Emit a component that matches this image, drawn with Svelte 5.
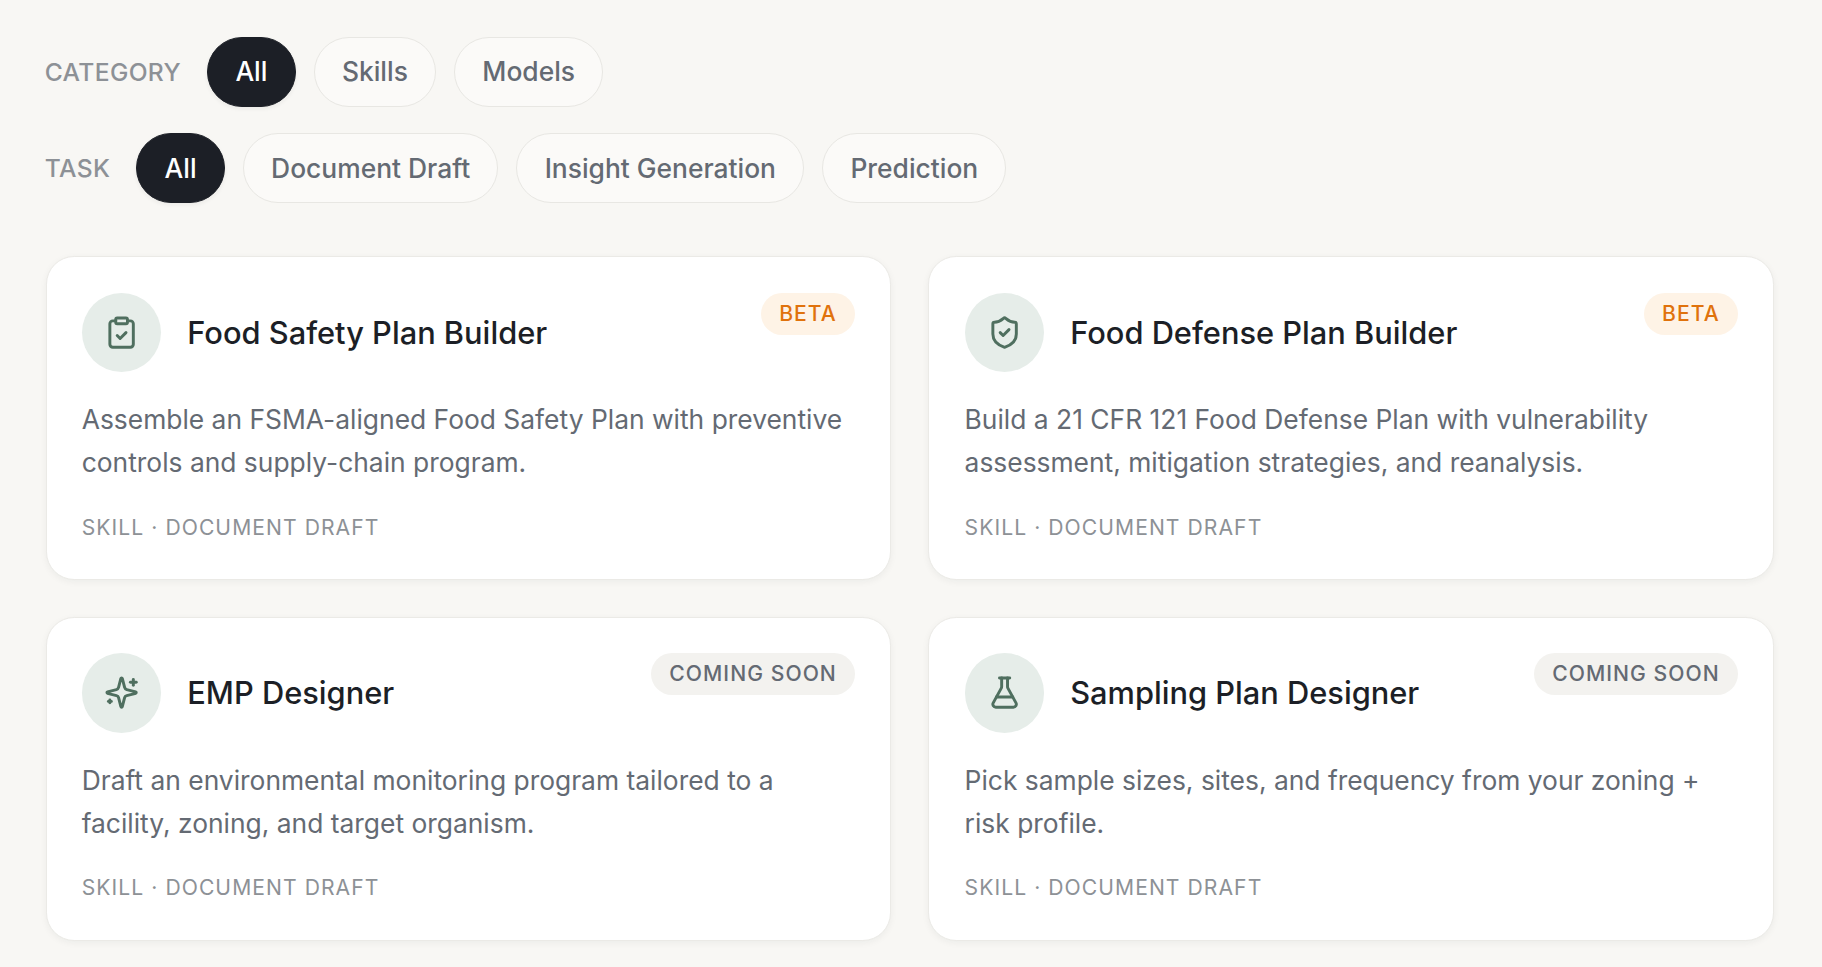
<script>
  const categories = ['All', 'Skills', 'Models'];
  const tasks = ['All', 'Document Draft', 'Insight Generation', 'Prediction'];
  const cards = [
    { title: 'Food Safety Plan Builder', badge: 'BETA', kind: 'beta', icon: 'clipboard', desc: 'Assemble an FSMA-aligned Food Safety Plan with preventive controls and supply-chain program.' },
    { title: 'Food Defense Plan Builder', badge: 'BETA', kind: 'beta', icon: 'shield', desc: 'Build a 21 CFR 121 Food Defense Plan with vulnerability assessment, mitigation strategies, and reanalysis.' },
    { title: 'EMP Designer', badge: 'COMING SOON', kind: 'soon', icon: 'sparkles', desc: 'Draft an environmental monitoring program tailored to a facility, zoning, and target organism.' },
    { title: 'Sampling Plan Designer', badge: 'COMING SOON', kind: 'soon', icon: 'flask', desc: 'Pick sample sizes, sites, and frequency from your zoning + risk profile.' }
  ];
</script>

<main class="page">
  <div class="filter-row">
    <span class="label">CATEGORY</span>
    {#each categories as c, i}
      <button class="chip" class:active={i === 0}>{c}</button>
    {/each}
  </div>
  <div class="filter-row">
    <span class="label">TASK</span>
    {#each tasks as t, i}
      <button class="chip" class:active={i === 0}>{t}</button>
    {/each}
  </div>

  <section class="grid">
    {#each cards as card}
      <article class="card">
        <div class="head">
          <div class="icon">
            <svg viewBox="0 0 24 24" fill="none" stroke="currentColor" stroke-width="2" stroke-linecap="round" stroke-linejoin="round">
              {#if card.icon === 'clipboard'}
                <rect width="8" height="4" x="8" y="2" rx="1" ry="1" />
                <path d="M16 4h2a2 2 0 0 1 2 2v14a2 2 0 0 1-2 2H6a2 2 0 0 1-2-2V6a2 2 0 0 1 2-2h2" />
                <path d="m9 14 2 2 4-4" />
              {:else if card.icon === 'shield'}
                <path d="M20 13c0 5-3.5 7.5-7.66 8.95a1 1 0 0 1-.67-.01C7.5 20.5 4 18 4 13V6a1 1 0 0 1 1-1c2 0 4.5-1.2 6.24-2.72a1.17 1.17 0 0 1 1.52 0C14.51 3.81 17 5 19 5a1 1 0 0 1 1 1z" />
                <path d="m9 12 2 2 4-4" />
              {:else if card.icon === 'sparkles'}
                <path d="M9.937 15.5A2 2 0 0 0 8.5 14.063l-6.135-1.582a.5.5 0 0 1 0-.962L8.5 9.936A2 2 0 0 0 9.937 8.5l1.582-6.135a.5.5 0 0 1 .963 0L14.063 8.5A2 2 0 0 0 15.5 9.937l6.135 1.581a.5.5 0 0 1 0 .964L15.5 14.063a2 2 0 0 0-1.437 1.437l-1.582 6.135a.5.5 0 0 1-.963 0z" />
                <path d="M20 3v4" />
                <path d="M22 5h-4" />
                <path d="M4 17v2" />
                <path d="M5 18H3" />
              {:else}
                <path d="M14 2v6a2 2 0 0 0 .245.96l5.51 10.08A2 2 0 0 1 18 22H6a2 2 0 0 1-1.755-2.96l5.51-10.08A2 2 0 0 0 10 8V2" />
                <path d="M6.453 15h11.094" />
                <path d="M8.5 2h7" />
              {/if}
            </svg>
          </div>
          <h3>{card.title}</h3>
          <span class="badge {card.kind}">{card.badge}</span>
        </div>
        <p class="desc">{card.desc}</p>
        <div class="meta">SKILL · DOCUMENT DRAFT</div>
      </article>
    {/each}
  </section>
</main>

<style>
  :global(body) {
    margin: 0;
    background: #f8f7f4;
    font-family: Inter, "Liberation Sans", sans-serif;
  }
  .page {
    padding: 36.6px 48px 26px 45.5px;
  }
  .filter-row {
    display: flex;
    align-items: center;
    gap: 18.1px;
    margin-bottom: 26px;
  }
  .label {
    font-size: 24.64px;
    font-weight: 500;
    letter-spacing: 0.35px;
    color: #8d9196;
    margin-left: -0.8px;
    margin-right: 8.1px;
  }
  .chip {
    height: 70.4px;
    padding: 0 27.2px 0.8px;
    border: 1.76px solid #e8e7e3;
    border-radius: 999px;
    background: #fbfaf8;
    color: #646a73;
    font-family: inherit;
    font-size: 26.4px;
    font-weight: 500;
  }
  .chip.active {
    background: #1c1f26;
    border-color: #1c1f26;
    color: #fff;
    box-shadow: 0 2px 4px rgba(28, 31, 38, 0.06);
  }
  .grid {
    display: grid;
    grid-template-columns: 1fr 1fr;
    gap: 37.3px;
    margin-top: 53.1px;
  }
  .card {
    background: #fff;
    border: 1.76px solid #ebeae6;
    border-radius: 28.16px;
    padding: 35.2px;
    box-shadow: 0 2px 7px rgba(28, 31, 38, 0.05);
  }
  .head {
    display: flex;
    align-items: center;
    position: relative;
  }
  .icon {
    width: 79.2px;
    height: 79.2px;
    border-radius: 50%;
    background: #e6ede9;
    color: #4f6f5f;
    display: flex;
    align-items: center;
    justify-content: center;
    flex: none;
    margin-right: 26.4px;
  }
  .icon svg {
    width: 35.2px;
    height: 35.2px;
  }
  h3 {
    margin: 0;
    font-size: 30.8px;
    font-weight: 500;
    color: #1c1f26;
  }
  .badge {
    position: absolute;
    top: 0;
    right: 0;
    height: 42px;
    line-height: 42px;
    padding: 0 18px;
    border-radius: 999px;
    font-size: 21.12px;
    font-weight: 500;
    letter-spacing: 1.06px;
  }
  .badge.beta {
    background: #fef3e6;
    color: #e0720c;
  }
  .badge.soon {
    background: #f3f2ef;
    color: #646a73;
  }
  .desc {
    margin: 26px 0 0;
    font-size: 26.4px;
    line-height: 1.65;
    color: #646a73;
  }
  .meta {
    margin-top: 26.7px;
    font-size: 21.12px;
    line-height: 32px;
    letter-spacing: 1.06px;
    color: #8d9196;
  }
</style>
